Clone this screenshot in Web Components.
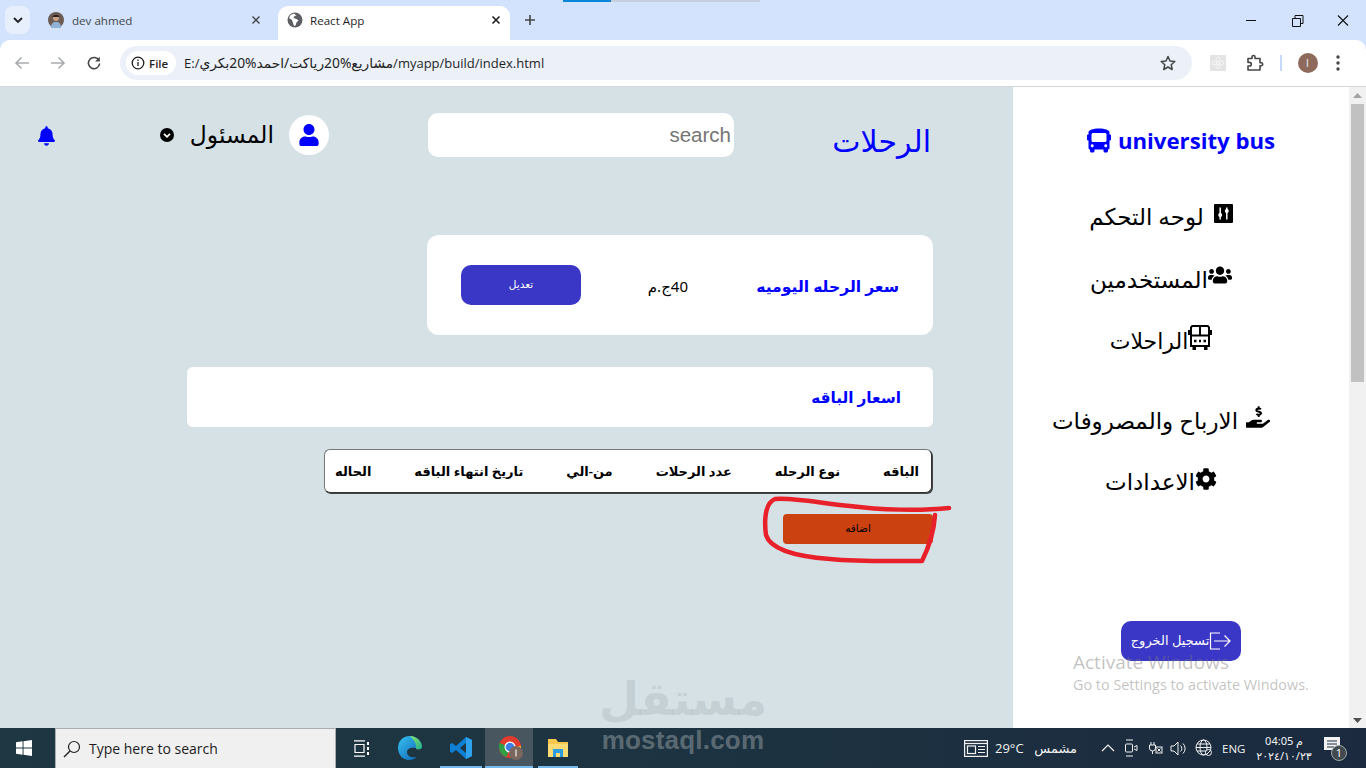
<!DOCTYPE html>
<html lang="en"><head><meta charset="utf-8"><title>React App</title>
<style>
html,body{margin:0;padding:0;height:768px;overflow:hidden;font-family:"Open Sans","DejaVu Sans",sans-serif}
body{display:flex;flex-direction:column;width:1366px;position:relative}
</style></head><body>
<chrome-bar></chrome-bar>
<app-viewport>
  <app-main slot="main"></app-main>
  <app-sidebar slot="side"></app-sidebar>
</app-viewport>
<task-bar></task-bar>
<page-overlays></page-overlays>
<script>
const P={
bus:["0 0 512 512","M488 128h-8V80c0-44.8-99.2-80-224-80S32 35.2 32 80v48h-8c-13.25 0-24 10.74-24 24v80c0 13.25 10.75 24 24 24h8v160c0 17.67 14.33 32 32 32v32c0 17.67 14.33 32 32 32h32c17.67 0 32-14.33 32-32v-32h192v32c0 17.67 14.33 32 32 32h32c17.67 0 32-14.33 32-32v-32h6.4c16 0 25.6-12.8 25.6-25.6V256h8c13.25 0 24-10.75 24-24v-80c0-13.26-10.75-24-24-24zM112 400c-17.67 0-32-14.33-32-32s14.33-32 32-32 32 14.33 32 32-14.33 32-32 32zm16-112c-17.67 0-32-14.33-32-32V128c0-17.67 14.33-32 32-32h256c17.67 0 32 14.33 32 32v128c0 17.67-14.33 32-32 32H128zm272 112c-17.67 0-32-14.33-32-32s14.33-32 32-32 32 14.33 32 32-14.33 32-32 32z"],
bell:["0 0 448 512","M224 512c35.32 0 63.97-28.65 63.97-64H160.03c0 35.35 28.65 64 63.97 64zm215.39-149.71c-19.32-20.76-55.47-51.99-55.47-154.29 0-77.7-54.48-139.9-127.94-155.16V32c0-17.67-14.32-32-31.98-32s-31.98 14.33-31.98 32v20.84C118.56 68.1 64.08 130.3 64.08 208c0 102.3-36.15 133.53-55.47 154.29-6 6.45-8.66 14.16-8.61 21.71.11 16.4 12.98 32 32.1 32h383.8c19.12 0 32-15.6 32.1-32 .05-7.55-2.61-15.27-8.61-21.71z"],
user:["0 0 448 512","M224 256c70.7 0 128-57.3 128-128S294.7 0 224 0 96 57.3 96 128s57.3 128 128 128zm89.6 32h-16.7c-22.2 10.2-46.9 16-72.9 16s-50.6-5.8-72.9-16h-16.7C60.2 288 0 348.2 0 422.4V464c0 26.5 21.5 48 48 48h352c26.5 0 48-21.5 48-48v-41.6c0-74.2-60.2-134.4-134.4-134.4z"],
users:["0 0 640 512","M96 224c35.3 0 64-28.7 64-64s-28.7-64-64-64-64 28.7-64 64 28.7 64 64 64zm448 0c35.3 0 64-28.7 64-64s-28.7-64-64-64-64 28.7-64 64 28.7 64 64 64zm32 32h-64c-17.6 0-33.5 7.1-45.1 18.6 40.3 22.1 68.9 62 75.1 109.4h66c17.7 0 32-14.3 32-32v-32c0-35.3-28.7-64-64-64zm-256 0c61.9 0 112-50.1 112-112S381.9 32 320 32 208 82.1 208 144s50.1 112 112 112zm76.8 32h-8.3c-20.8 10-43.9 16-68.5 16s-47.6-6-68.5-16h-8.3C179.6 288 128 339.6 128 403.2V432c0 26.5 21.5 48 48 48h288c26.5 0 48-21.5 48-48v-28.8c0-63.6-51.6-115.2-115.2-115.2zm-223.7-13.4C161.5 263.1 145.6 256 128 256H64c-35.3 0-64 28.7-64 64v32c0 17.7 14.3 32 32 32h65.9c6.3-47.4 34.9-87.3 75.2-109.4z"],
cog:["0 0 512 512","M487.4 315.7l-42.6-24.6c4.3-23.2 4.3-47 0-70.2l42.6-24.6c4.9-2.8 7.1-8.6 5.5-14-11.1-35.6-30-67.8-54.7-94.6-3.8-4.1-10-5.1-14.8-2.3L380.8 110c-17.9-15.4-38.5-27.3-60.8-35.1V25.8c0-5.6-3.9-10.5-9.4-11.7-36.7-8.2-74.3-7.8-109.2 0-5.5 1.2-9.4 6.1-9.4 11.7V75c-22.2 7.9-42.8 19.8-60.8 35.1L88.7 85.5c-4.9-2.8-11-1.9-14.8 2.3-24.7 26.7-43.6 58.9-54.7 94.6-1.7 5.4.6 11.2 5.5 14L67.3 221c-4.3 23.2-4.3 47 0 70.2l-42.6 24.6c-4.9 2.8-7.1 8.6-5.5 14 11.1 35.6 30 67.8 54.7 94.6 3.8 4.1 10 5.1 14.8 2.3l42.6-24.6c17.9 15.4 38.5 27.3 60.8 35.1v49.2c0 5.6 3.9 10.5 9.4 11.7 36.7 8.2 74.3 7.8 109.2 0 5.5-1.2 9.4-6.1 9.4-11.7v-49.2c22.2-7.9 42.8-19.8 60.8-35.1l42.6 24.6c4.9 2.8 11 1.9 14.8-2.3 24.7-26.7 43.6-58.9 54.7-94.6 1.5-5.5-.7-11.3-5.6-14.1zM256 336c-44.1 0-80-35.9-80-80s35.9-80 80-80 80 35.9 80 80-35.9 80-80 80z"],
hand:["0 0 576 512","M271.06,144.3l54.27,14.3a8.59,8.59,0,0,1,6.63,8.1c0,4.6-4.09,8.4-9.12,8.4h-35.6a30,30,0,0,1-11.19-2.2c-5.24-2.2-11.28-1.7-15.3,2l-19,17.5a11.68,11.68,0,0,0-2.25,2.66,11.42,11.42,0,0,0,3.88,15.74,83.77,83.77,0,0,0,34.51,11.5V240c0,8.8,7.83,16,17.37,16h17.37c9.55,0,17.38-7.2,17.38-16V222.4c32.93-3.6,57.84-31,53.5-63-3.15-23-22.46-41.3-46.56-47.7L282.68,97.4a8.59,8.59,0,0,1-6.63-8.1c0-4.6,4.09-8.4,9.12-8.4h35.6A30,30,0,0,1,332,83.1c5.23,2.2,11.28,1.7,15.3-2l19-17.5A11.31,11.31,0,0,0,368.47,61a11.43,11.43,0,0,0-3.84-15.78,83.82,83.82,0,0,0-34.52-11.5V16c0-8.8-7.82-16-17.37-16H295.37C285.82,0,278,7.2,278,16V33.6c-32.89,3.6-57.85,31-53.51,63C227.63,119.6,247,137.9,271.06,144.3ZM565.27,328.1c-11.8-10.7-30.2-10-42.6,0L430.27,402a63.64,63.64,0,0,1-40,14H272a16,16,0,0,1,0-32h78.29c15.9,0,30.71-10.9,33.25-26.6a31.2,31.2,0,0,0,.46-5.46A32,32,0,0,0,352,320H192a117.66,117.66,0,0,0-74.1,26.29L71.4,384H16A16,16,0,0,0,0,400v96a16,16,0,0,0,16,16H372.77a64,64,0,0,0,40-14L564,377a32,32,0,0,0,1.28-48.9Z"]
};
const ic=(n,w,h,c)=>`<svg width="${w}" height="${h}" viewBox="${P[n][0]}" fill="${c}" style="display:block;flex:none"><path d="${P[n][1]}"/></svg>`;
const AR='"Noto Sans","DejaVu Sans",sans-serif';

class Base extends HTMLElement{
  constructor(){super();this.attachShadow({mode:'open'}).innerHTML=this.markup();}
}
class ChromeBar extends Base{markup(){return `<style>
:host{display:block;flex:none;height:87px;background:#d3e3fd;color:#1f1f1f;font:11.6px "Open Sans",sans-serif;position:relative}
.tabs{height:40px;display:flex;align-items:flex-end;padding-left:5px;box-sizing:border-box}
.list{width:25px;height:28px;background:#e7effc;border-radius:8px;margin-bottom:6px;display:flex;align-items:center;justify-content:center}
.tab{height:34px;display:flex;align-items:center;box-sizing:border-box;position:relative;padding-bottom:6px}
.t1{width:248px;padding-left:18px;color:#444746}
.t2{width:232px;background:#fff;border-radius:10px 10px 0 0;padding-left:9px}
.fav{width:16px;height:16px;flex:none;margin-right:8px;display:block}
.name{flex:1}
.x{margin-right:9px;display:block}
.plus{margin-left:14px;margin-bottom:14px;display:block}
.win{margin-left:auto;display:flex;height:40px;align-items:center}
.win svg{display:block;margin-right:0}
.tool{height:46px;background:#fff;display:flex;align-items:center;border-radius:10px 10px 0 0;box-sizing:border-box;position:relative}
.nav{width:36px;display:flex;justify-content:center;flex:none}
.omni{margin-left:8px;width:1072px;height:34px;background:#ecf1f9;border-radius:17px;display:flex;align-items:center;padding-left:6px;box-sizing:border-box;flex:none}
.chip{width:50px;height:24px;background:#fff;border-radius:12px;display:flex;align-items:center;gap:4px;padding-left:5px;box-sizing:border-box;font-weight:600;color:#1f1f1f;font-size:11.5px}
.url{margin-left:8px;font-size:13px;color:#1f1f1f;flex:1;white-space:nowrap;margin-top:-2px}
.url i{font-style:normal;font-size:13.8px;font-family:${AR}}
.rline{height:1px;background:#d4d8dc}
.stripe{position:absolute;top:0;left:563px;width:48px;height:2px;background:#0a84d8}
.stripe2{position:absolute;top:0;left:611px;width:149px;height:2px;background:#c5cfdd}
.avatar{width:20px;height:20px;border-radius:50%;background:#8d6a5c;color:#eee;font:10px "Liberation Sans";display:flex;align-items:center;justify-content:center}
</style>
<div class="stripe"></div><div class="stripe2"></div>
<div class="tabs">
 <div class="list"><svg width="10" height="7" viewBox="0 0 10 7"><path d="M1 1l4 4 4-4" fill="none" stroke="#1f1f1f" stroke-width="1.8"/></svg></div>
 <div class="tab t1">
  <svg class="fav" viewBox="0 0 16 16"><circle cx="8" cy="8" r="8" fill="#6c5a54"/><path d="M3 16c0-5 2-6 5-6s5 1 5 6z" fill="#8fb2d6"/><circle cx="8" cy="6" r="3" fill="#c9a184"/><path d="M4.500 5C5 2 11 2 11.500 5z" fill="#2b211f"/></svg>
  <span class="name">dev ahmed</span>
  <svg class="x" width="10" height="10" viewBox="0 0 10 10" style="margin-right:17px"><path d="M1.500 1.500l7 7m0-7l-7 7" stroke="#444746" stroke-width="1.4"/></svg>
 </div>
 <div class="tab t2">
  <svg class="fav" viewBox="0 0 16 16"><circle cx="8" cy="8" r="7.500" fill="#5b5e62"/><path d="M7 1.500L3.500 3 2 6l3 2 1 3 1 3 1.500-.5 1-3 2-2-2-1.500-3-1 1-2 2-.5z" fill="#fff"/></svg>
  <span class="name" style="margin-left:-1px">React App</span>
  <svg class="x" width="10" height="10" viewBox="0 0 10 10"><path d="M1.500 1.500l7 7m0-7l-7 7" stroke="#1f1f1f" stroke-width="1.6"/></svg>
 </div>
 <svg class="plus" width="12" height="12" viewBox="0 0 12 12"><path d="M6 1v10M1 6h10" stroke="#444746" stroke-width="1.6"/></svg>
 <div class="win">
  <svg width="45" height="40" viewBox="0 0 45 40"><path d="M17 20.500h10" stroke="#111" stroke-width="1"/></svg>
  <svg width="46" height="40" viewBox="0 0 46 40"><path d="M18.500 18.500h8v8h-8zM21 18v-2.500h8v8h-2.500" fill="none" stroke="#111"/></svg>
  <svg width="46" height="40" viewBox="0 0 46 40"><path d="M18 15.500l10 10m0-10l-10 10" stroke="#111" stroke-width="1.100"/></svg>
 </div>
</div>
<div class="tool">
 <div class="nav" style="margin-left:4px"><svg width="16" height="14" viewBox="0 0 16 14"><path d="M15 7H2M7.500 1.500L2 7l5.500 5.500" fill="none" stroke="#a8abaf" stroke-width="1.600"/></svg></div>
 <div class="nav"><svg width="16" height="14" viewBox="0 0 16 14"><path d="M1 7h13M8.500 1.500L14 7l-5.500 5.500" fill="none" stroke="#a8abaf" stroke-width="1.600"/></svg></div>
 <div class="nav"><svg width="14" height="14" viewBox="0 0 14 14"><path d="M12 4.500A5.600 5.600 0 1 0 12.600 7.500" fill="none" stroke="#444746" stroke-width="1.600"/><path d="M12.800 .8v4.700H8.100z" fill="#444746"/></svg></div>
 <div class="omni">
  <div class="chip"><svg width="14" height="14" viewBox="0 0 14 14" style="flex:none"><circle cx="7" cy="7" r="5.800" fill="none" stroke="#1f1f1f" stroke-width="1.300"/><path d="M7 6v4M7 3.600v1.400" stroke="#1f1f1f" stroke-width="1.300"/></svg>File</div>
  <span class="url">E:/<i>مشاريع%20رياكت/احمد%20بكري</i>/myapp/build/index.html</span>
  <svg width="18" height="18" viewBox="0 0 18 18" style="margin-right:15px;flex:none"><path d="M9 2.500l2 4.500 4.800.5-3.600 3.200 1 4.800L9 13l-4.200 2.500 1-4.800L2.200 7.500 7 7z" fill="none" stroke="#444746" stroke-width="1.500" stroke-linejoin="round"/></svg>
 </div>
 <svg width="16" height="16" viewBox="0 0 16 16" style="margin-left:18px;flex:none"><rect width="16" height="16" fill="#e4e4e4"/><g fill="none" stroke="#f6f6f6" stroke-width="1"><circle cx="8" cy="4.500" r="2"/><circle cx="8" cy="11.500" r="2"/><circle cx="4.500" cy="8" r="2"/><circle cx="11.500" cy="8" r="2"/><circle cx="8" cy="8" r="1.500"/></g></svg>
 <svg width="18" height="18" viewBox="0 0 18 18" style="margin-left:20px;flex:none"><path d="M2 4.500h4V3a1.500 1.500 0 0 1 3 0v1.500h5v4.200h1.200a1.500 1.500 0 0 1 0 3H14V16H2v-4h1.500a1.800 1.800 0 0 0 0-3.600H2z" fill="none" stroke="#444746" stroke-width="1.600" stroke-linejoin="round"/></svg>
 <div style="width:1.500px;height:16px;background:#c8dafc;margin-left:16px;flex:none"></div>
 <div class="avatar" style="margin-left:16px;flex:none">I</div>
 <svg width="4" height="16" viewBox="0 0 4 16" style="margin-left:18px;flex:none"><circle cx="2" cy="2" r="1.700" fill="#444746"/><circle cx="2" cy="8" r="1.700" fill="#444746"/><circle cx="2" cy="14" r="1.700" fill="#444746"/></svg>
</div>
<div class="rline"></div>`}}
customElements.define('chrome-bar',ChromeBar);

class AppViewport extends Base{markup(){return `<style>
:host{display:flex;flex:none;height:641px;overflow:hidden;background:#fff}
.sb{width:17px;flex:none;background:#f1f1f1;position:relative;display:flex;flex-direction:column;align-items:center}
.thumb{width:13px;height:278px;background:#c1c1c1;margin-top:17px}
.dn{margin-top:auto;margin-bottom:5px;display:block}
.up{position:absolute;top:6px;left:4px}
</style><slot name="main"></slot><slot name="side"></slot>
<div class="sb"><svg class="up" width="9" height="5" viewBox="0 0 9 5"><path d="M4.500 0L9 5H0z" fill="#a3a3a3"/></svg><div class="thumb"></div><svg class="dn" width="9" height="5" viewBox="0 0 9 5"><path d="M0 0h9L4.500 5z" fill="#505050"/></svg></div>`}}
customElements.define('app-viewport',AppViewport);

class PriceCard extends Base{markup(){return `<style>
:host{display:flex;direction:rtl;align-items:center;box-sizing:border-box;background:#fff;border-radius:12px;width:506px;height:100px;margin-left:427px;margin-top:78px;padding-right:34px;font-family:${AR}}
.t{width:142px;color:#00f;font-weight:700;font-size:15.6px;white-space:nowrap;flex:none;margin-top:2px}
.v{margin-right:69px;font-size:15px;width:40px;flex:none;white-space:nowrap;margin-top:2px}
.b{margin-right:67px;width:120px;height:40px;border-radius:10px;background:#3a37c6;color:#fff;font-size:10.500px;display:flex;align-items:center;justify-content:center;flex:none;padding-bottom:3px;box-sizing:border-box}
</style><div class="t">سعر الرحله اليوميه</div><div class="v">40ج.م</div><div class="b">تعديل</div>`}}
customElements.define('price-card',PriceCard);

class PackageTable extends Base{markup(){return `<style>
:host{display:block;width:608px;margin-left:324px;margin-top:22px;font-family:${AR}}
.bar{box-sizing:border-box;height:44px;background:#fff;border:1px solid #777;border-right-color:#333;border-bottom-color:#333;border-radius:6px;box-shadow:1px 1px 0 #444;display:flex;direction:rtl;align-items:center;justify-content:space-between;padding:0 12px 0 10px;font-size:13px;font-weight:600;color:#000;white-space:nowrap}
</style><div class="bar"><span>الباقه</span><span>نوع الرحله</span><span>عدد الرحلات</span><span>من-الي</span><span>تاريخ انتهاء الباقه</span><span>الحاله</span></div>`}}
customElements.define('package-table',PackageTable);

class AppMain extends Base{markup(){return `<style>
:host{display:block;width:1013px;flex:none;background:#d6e1e6;font-family:${AR};color:#000}
.head{display:flex;direction:rtl;align-items:center;height:44px;margin-top:26px;padding-right:82px;box-sizing:border-box}
.title{width:197px;font-size:30px;color:#00f;flex:none;margin-top:12px;white-space:nowrap;line-height:30px}
.search{width:306px;height:44px;background:#fff;border-radius:10px;flex:none;box-sizing:border-box;padding-right:3px;display:flex;align-items:center;font:20.5px "Liberation Sans",sans-serif;color:#757575;direction:ltr;justify-content:flex-end}
.av{margin-right:99px;width:40px;height:40px;border-radius:50%;background:#fff;display:flex;align-items:center;justify-content:center;flex:none}
.nm{margin-right:15px;width:83px;flex:none;font-size:23.4px;white-space:nowrap;margin-top:-2px}
.ch{margin-right:17px;flex:none;margin-top:-1px}
.bell{margin-right:105px;flex:none;margin-top:1px}
.pk{box-sizing:border-box;width:746px;height:60px;margin:32px 0 0 187px;background:#fff;border-radius:6px;direction:rtl;padding-right:32px;display:flex;align-items:center;color:#00f;font-weight:700;font-size:15.3px}
.add{width:150px;height:30px;margin:21px 0 0 783px;background:#cb410f;border-radius:4px;display:flex;align-items:center;justify-content:center;font-size:10.5px;color:#000;box-sizing:border-box;padding-bottom:3px}
</style>
<div class="head">
 <div class="title">الرحلات</div>
 <div class="search">search</div>
 <div class="av">${ic('user',20,22,'#00f')}</div>
 <div class="nm">المسئول</div>
 <svg class="ch" width="14" height="14" viewBox="0 0 14 14"><circle cx="7" cy="7" r="7" fill="#000"/><path d="M4 5.800l3 3 3-3" fill="none" stroke="#fff" stroke-width="1.800"/></svg>
 <div class="bell">${ic('bell',17,22,'#00f')}</div>
</div>
<price-card></price-card>
<div class="pk">اسعار الباقه</div>
<package-table></package-table>
<div class="add">اضافه</div>`}}
customElements.define('app-main',AppMain);

class NavItem extends Base{
  markup(){return `<style>
:host{display:flex;justify-content:center;align-items:center;direction:rtl;font-family:${AR};font-size:23px;color:#000;white-space:nowrap;height:40px}
</style><slot name="icon"></slot><slot></slot>`}}
customElements.define('nav-item',NavItem);

class AppSidebar extends Base{markup(){return `<style>
:host{display:block;width:336px;flex:none;background:#fff;box-sizing:border-box;position:relative}
.logo{display:flex;justify-content:center;align-items:center;gap:7px;height:36px;margin-top:35px;color:#00f;font:700 22.2px "Open Sans",sans-serif;white-space:nowrap}
nav{display:flex;flex-direction:column;padding-right:40px;margin-top:38px}
.out{box-sizing:border-box;width:120px;height:40px;border-radius:10px;background:#3a37c6;color:#fff;display:flex;direction:rtl;align-items:center;justify-content:center;margin:0 auto;font-family:${AR};font-size:13px;white-space:nowrap}
.out span{margin-top:-3px}
.spacer{height:120px}
</style>
<div class="logo">${ic('bus',24,25,'#00f')}<span>university bus</span></div>
<nav>
 <nav-item><svg slot="icon" width="19" height="19" viewBox="0 0 19 19" style="margin-left:10px;flex:none;margin-top:-6px"><rect width="19" height="19" rx="1" fill="#000"/><path d="M6.200 3.500v12M12.800 3.500v12" stroke="#fff" stroke-width="1.500"/><circle cx="6.200" cy="11" r="2" fill="#fff"/><circle cx="12.800" cy="7" r="2" fill="#fff"/></svg>لوحه التحكم</nav-item>
 <nav-item style="margin-top:23px">${ic('users',24,20,'#000').replace('<svg','<svg slot="icon"').replace('display:block;','display:block;margin-top:-8px;')}المستخدمين</nav-item>
 <nav-item style="margin-top:21px;font-size:22px"><svg slot="icon" width="24" height="26" viewBox="0 0 24 26" style="flex:none;margin-top:-5px"><g fill="none" stroke="#000" stroke-width="2"><path d="M3 2.500a2 2 0 0 1 2-1.500h14a2 2 0 0 1 2 1.500V21H3z"/><path d="M3 10.500h18M12 1v9.500"/></g><rect x="0" y="5" width="2" height="5" fill="#000"/><rect x="22" y="5" width="2" height="5" fill="#000"/><path d="M6 16h2.500M11 16h2M15.500 16H18" stroke="#000" stroke-width="2.500"/><rect x="4.500" y="21" width="3.500" height="4" fill="#000"/><rect x="16" y="21" width="3.500" height="4" fill="#000"/></svg>الراحلات</nav-item>
 <nav-item style="margin-top:40px">${ic('hand',24,24,'#000').replace('<svg','<svg slot="icon" ').replace('display:block;','display:block;margin-left:8px;margin-top:-7px;')}الارباح والمصروفات</nav-item>
 <nav-item style="margin-top:21px">${ic('cog',22,24,'#000').replace('<svg','<svg slot="icon" ').replace('display:block;','display:block;margin-top:-4px;')}الاعدادات</nav-item>
</nav>
<div class="spacer"></div>
<div class="out"><svg width="22" height="18" viewBox="0 0 22 18" style="flex:none;margin-top:-1px"><path d="M11 1H1.500v16H11M5 9h16M15.500 3.500L21 9l-5.500 5.500" fill="none" stroke="#fff" stroke-width="1.200"/></svg><span>تسجيل الخروج</span></div>`}}
customElements.define('app-sidebar',AppSidebar);

class TaskBar extends Base{markup(){return `<style>
:host{display:flex;flex:none;height:40px;background:linear-gradient(90deg,#1f3742,#1d3341 50%,#1b2a3f);color:#fff;align-items:center;font:12px "Open Sans",sans-serif}
.start{width:55px;flex:none;display:flex;padding-left:16px;box-sizing:border-box}
.search{width:281px;height:40px;background:#f0f0f0;flex:none;box-sizing:border-box;border:1px solid #a8aeb2;border-bottom:0;display:flex;align-items:center;padding-left:6px;color:#1c1c1c;font-size:14px}
.slot{height:40px;display:flex;align-items:center;justify-content:center;flex:none;position:relative;box-sizing:border-box}
.on::after{content:"";position:absolute;left:0;right:0;bottom:0;height:2px;background:#76b9ed}
.hl{background:#47565f}
.tray{margin-left:auto;display:flex;align-items:center;height:40px;color:#f2f2f2}
.clock{display:flex;flex-direction:column;align-items:center;font-size:11px;line-height:15px;margin-left:12px;width:52px;white-space:nowrap}
.ar{font-family:${AR}}
</style>
<div class="start"><svg width="16" height="16" viewBox="0 0 17 17" fill="#fff"><path d="M0 2.400L7 1.400V8H0zM8 1.300L17 0v8H8zM0 9h7v6.600L0 14.600zM8 9h9v8l-9-1.300z"/></svg></div>
<div class="search"><svg width="20" height="20" viewBox="0 0 20 20" style="margin-right:7px;flex:none"><circle cx="12" cy="8" r="5.500" fill="none" stroke="#222" stroke-width="1.200"/><path d="M8 12l-6 6" stroke="#222" stroke-width="1.400"/></svg>Type here to search</div>
<div class="slot" style="width:50px"><svg width="17" height="17" viewBox="0 0 17 17" fill="none" stroke="#fff" stroke-width="1.200"><path d="M1 .8h11M1 16.200h11M2 4.500h9v8H2z"/><path d="M15 2v3M15 7v3M15 12v3" stroke-width="2"/></svg></div>
<div class="slot" style="width:48px"><svg width="26" height="26" viewBox="0 0 26 26"><defs><linearGradient id="e1" x1="0" y1="0" x2="1" y2="1"><stop offset="0" stop-color="#35c1f1"/><stop offset="1" stop-color="#0f5fb0"/></linearGradient><linearGradient id="e2" x1="0" y1="0" x2="1" y2="1"><stop offset="0" stop-color="#8fe36d"/><stop offset="1" stop-color="#1fae8c"/></linearGradient></defs><path d="M13 1C5 1 1 7 1 13c0 7 5 12 11 12 3 0 6-1 8-3-4 1-10 0-10-5 0-4 5-5 9-4 3 0 5 1 6 0C25 6 20 1 13 1z" fill="url(#e1)"/><path d="M13 1c6 0 12 5 12 11 0 2-3 3-6 2 1-5-2-9-6-13z" fill="url(#e2)"/></svg></div>
<div class="slot on" style="width:42px;margin-left:6px;margin-right:3px"><svg width="24" height="24" viewBox="0 0 24 24"><path d="M17 1l6 3v16l-6 3L7 14l-4 3-2-1V8l2-1 4 3zM17 7l-6 5 6 5z" fill="#0e7fd3" fill-rule="evenodd"/><path d="M17 1l6 3v16l-6 3z" fill="#2fa3ee"/></svg></div>
<div class="slot on hl" style="width:48px;padding-left:4px"><svg width="26" height="26" viewBox="0 0 26 26"><circle cx="12" cy="12" r="11" fill="#e33b2e"/><path d="M12 12L1.500 8a11 11 0 0 0 7 14z" fill="#2f9e44"/><path d="M12 12l11-1a11 11 0 0 1-9 12z" fill="#f7c325"/><circle cx="12" cy="12" r="5.500" fill="#fff"/><circle cx="12" cy="12" r="4.300" fill="#3d7fe6"/><circle cx="18" cy="18" r="7" fill="#7a675e"/><rect x="17.300" y="14.500" width="1.400" height="7" fill="#ddd"/></svg></div>
<div class="slot on" style="width:40px;margin-left:5px"><svg width="22" height="22" viewBox="0 0 22 22"><path d="M1 2h8l2 3h10v15H1z" fill="#f6c94e"/><path d="M1 7h20v13H1z" fill="#fbdc74"/><path d="M6 12h10v8H6z" fill="#2f9be0"/><path d="M9 16h4v4H9z" fill="#fbdc74"/></svg></div>
<div class="tray">
 <svg width="24" height="17" viewBox="0 0 24 17" fill="none" stroke="#f2f2f2" stroke-width="1.200" style="margin-right:7px"><rect x=".6" y=".6" width="22.800" height="15.800"/><path d="M.6 3.500h22.800"/><rect x="3.500" y="6" width="8" height="7.500"/><path d="M14 6.500h7M14 9.500h7M14 12.500h7"/></svg>
 <span style="width:39px;font-size:13px">29°C</span>
 <span class="ar" style="width:43px;font-size:13px;white-space:nowrap;direction:rtl">مشمس</span>
 <svg width="14" height="8" viewBox="0 0 14 8" style="margin-left:24px"><path d="M1 7l6-6 6 6" fill="none" stroke="#f2f2f2" stroke-width="1.200"/></svg>
 <svg width="14" height="18" viewBox="0 0 14 18" fill="none" stroke="#f2f2f2" style="margin-left:9px"><path d="M2 1h7M2 17h7"/><rect x="1.500" y="5" width="7" height="8" rx="1"/><path d="M10 8l3-1.500v5L10 10"/></svg>
 <svg width="16" height="14" viewBox="0 0 16 14" fill="none" stroke="#f2f2f2" style="margin-left:9px"><path d="M4 1v3M7 1v3M2.500 4h6v3a3 3 0 0 1-6 0zM5.500 10v3"/><rect x="9" y="6" width="6" height="6"/><path d="M10.500 7.500l3 3m0-3l-3 3"/></svg>
 <svg width="17" height="15" viewBox="0 0 17 15" fill="none" stroke="#f2f2f2" style="margin-left:7px"><path d="M1 5h3l4-4v13l-4-4H1zM10.500 4.500a4 4 0 0 1 0 6M13 2.500a7 7 0 0 1 0 10"/></svg>
 <svg width="18" height="18" viewBox="0 0 18 18" fill="none" stroke="#f2f2f2" style="margin-left:8px"><circle cx="8.500" cy="8.500" r="7.500"/><ellipse cx="8.500" cy="8.500" rx="3.500" ry="7.500"/><path d="M1 8.500h15M2 5h13M2 12h13"/><circle cx="13.500" cy="13.500" r="3" fill="#1c2c40"/><path d="M11.500 15.500l4-4"/></svg>
 <span style="margin-left:9px;font-size:11.500px;width:24px">ENG</span>
 <div class="clock ar"><span><span>م</span> 04:05</span><span>٢٠٢٤/١٠/٢٣</span></div>
 <svg width="28" height="30" viewBox="0 0 28 30" style="margin-left:13px;margin-right:15px"><path d="M1 4h16v13h-4v4l-4-4H1z" fill="#f2f2f2"/><path d="M4 8h10M4 11h10M4 14h7" stroke="#1c2c40"/><circle cx="16" cy="20" r="7.500" fill="#42494f" stroke="#9aa" /><text x="16" y="24" font-size="11" font-family="Open Sans" fill="#fff" text-anchor="middle">1</text></svg>
</div>`}}
customElements.define('task-bar',TaskBar);

class PageOverlays extends Base{markup(){return `<style>
:host{position:absolute;left:0;top:0;width:1366px;height:768px;pointer-events:none;display:block}
.act{position:absolute;left:1073px;top:650px;color:rgba(120,120,120,.45);font:14.4px "Open Sans",sans-serif;white-space:nowrap}
.act b{display:block;font-weight:400;font-size:19px;line-height:24px}
.act span{display:block;margin-top:1px;line-height:20px}
.wm{position:absolute;left:583px;top:668px;width:200px;text-align:center;line-height:1}
.wm .a{font:700 46px "DejaVu Sans",sans-serif;line-height:62px;color:rgba(110,120,125,.17)}
.wm .l{position:absolute;left:0;top:57px;width:200px;font:700 26px "Liberation Sans",sans-serif;color:rgba(190,195,198,.4);letter-spacing:.2px}
svg{position:absolute;left:0;top:0}
</style>
<svg width="1366" height="768" viewBox="0 0 1366 768"><path d="M949 508C920 511 880 510 850 506 820 503 790 497 775 499 765 503 764 520 766 535 770 548 790 556 830 559 860 562 890 561 922 561 930 545 934 530 935 515" fill="none" stroke="#e8202a" stroke-width="4.500" stroke-linecap="round" stroke-linejoin="round"/></svg>
<div class="wm"><div class="a">مستقل</div><div class="l">mostaql.com</div></div>
<div class="act"><b>Activate Windows</b><span>Go to Settings to activate Windows.</span></div>`}}
customElements.define('page-overlays',PageOverlays);
</script>
</body></html>
